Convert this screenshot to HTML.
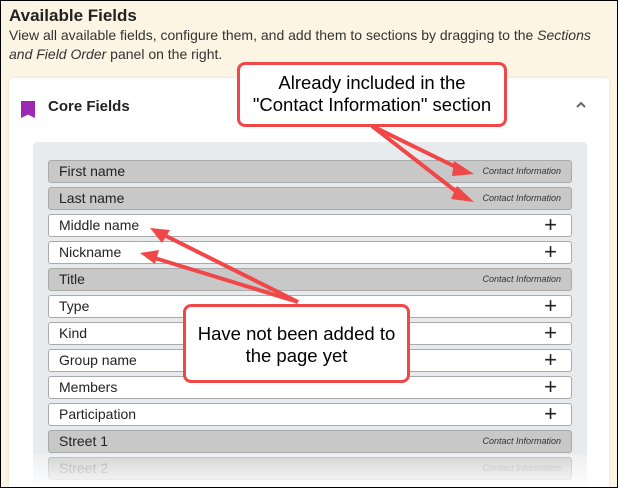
<!DOCTYPE html>
<html><head><style>
*{margin:0;padding:0;box-sizing:border-box}
html,body{width:618px;height:488px;overflow:hidden}
body{background:#fdf5e4;font-family:"Liberation Sans",Arial,sans-serif;position:relative}
.frame{position:absolute;left:0;top:0;width:618px;height:488px;border:1px solid #000;z-index:10;pointer-events:none}
h1{position:absolute;left:9px;top:6px;font-size:17px;font-weight:bold;color:#222}
.desc{position:absolute;left:9px;top:26px;width:600px;font-size:14px;line-height:19px;color:#333}
.card{position:absolute;left:9px;top:78px;width:600px;height:420px;background:#fff;border-radius:4px;box-shadow:0 0 3px rgba(0,0,0,.1)}
.bm{position:absolute;left:21px;top:101px;width:14px;height:17px;background:#9c27b0;clip-path:polygon(0 0,100% 0,100% 100%,50% 80%,0 100%)}
.ct{position:absolute;left:48px;top:98px;font-size:15px;font-weight:bold;color:#222}
.chev{position:absolute;left:574px;top:98px;}
.panel{position:absolute;left:33px;top:142px;width:554px;height:350px;background:#e8ebee;border-radius:4px}
.row{position:absolute;left:48px;width:524px;height:23px;border:1px solid #aaa;border-radius:3px;background:#fff;font-size:14px;line-height:20px;padding-left:10px;color:#222}
.row.g{background:#c8c8c8}
.row i{position:absolute;right:10px;top:0;font-size:9px;color:#333}
.row b{position:absolute;right:14px;top:-2px;font-weight:normal;font-size:22px;line-height:24px}
.fade{position:absolute;left:9px;top:454px;width:600px;height:34px;background:linear-gradient(rgba(255,255,255,.2),rgba(255,255,255,.95))}
.call{position:absolute;background:#fff;border:3px solid #f04848;border-radius:8px;text-align:center;font-size:18.5px;line-height:22px;color:#000}
</style></head><body>
<h1>Available Fields</h1>
<div class="desc">View all available fields, configure them, and add them to sections by dragging to the <i>Sections and Field Order</i> panel on the right.</div>
<div class="card"></div>
<div class="bm"></div>
<div class="ct">Core Fields</div>
<svg class="chev" width="14" height="14"><path d="M3 9 L7 5 L11 9" stroke="#666" stroke-width="2" fill="none"/></svg>
<div class="panel"></div>
<div class="row g" style="top:160px">First name<i>Contact Information</i></div>
<div class="row g" style="top:187px">Last name<i>Contact Information</i></div>
<div class="row" style="top:214px">Middle name<b>+</b></div>
<div class="row" style="top:241px">Nickname<b>+</b></div>
<div class="row g" style="top:268px">Title<i>Contact Information</i></div>
<div class="row" style="top:295px">Type<b>+</b></div>
<div class="row" style="top:322px">Kind<b>+</b></div>
<div class="row" style="top:349px">Group name<b>+</b></div>
<div class="row" style="top:376px">Members<b>+</b></div>
<div class="row" style="top:403px">Participation<b>+</b></div>
<div class="row g" style="top:430px">Street 1<i>Contact Information</i></div>
<div class="row g" style="top:457px;color:#888">Street 2<i style="color:#999">Contact Information</i></div>
<div class="fade"></div>
<svg style="position:absolute;left:0;top:0" width="618" height="488">
<g stroke="#f04848" stroke-width="4" fill="#f04848">
<line x1="372" y1="126" x2="462" y2="170"/><line x1="372" y1="126" x2="462" y2="196"/>
<line x1="298" y1="302" x2="158" y2="232"/><line x1="298" y1="302" x2="148" y2="256"/>
</g>
<g fill="#f04848">
<polygon points="474,174 454,161 452,176"/>
<polygon points="474,202 457,186 451,199"/>
<polygon points="150,228 170,230 162,243"/>
<polygon points="140,253 159,250 155,264"/>
</g>
</svg>
<div class="call" style="left:237px;top:62px;width:270px;height:65px;padding-top:7px">Already included in the<br>"Contact Information" section</div>
<div class="call" style="left:183px;top:304px;width:227px;height:79px;padding-top:16px">Have not been added to<br>the page yet</div>
<div class="frame"></div>
</body></html>
